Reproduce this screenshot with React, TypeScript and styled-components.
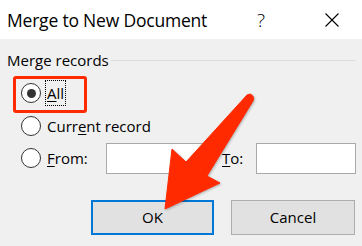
import styled, { createGlobalStyle } from "styled-components"

const GlobalStyle = createGlobalStyle`
	html, body {
		margin: 0;
		padding: 0;
		background: #f0f0f0;
	}
	body {
		font-family: "Open Sans", "Noto Sans", sans-serif;
		color: #000;
	}
`

const Dialog = styled.div`
	position: relative;
	width: 362px;
	height: 246px;
	overflow: hidden;

	display: flex;
	flex-direction: column;

	background: #f0f0f0;
`

const TitleBar = styled.div`
	height: 39px;
	flex-shrink: 0;

	display: flex;
	align-items: center;
	padding-left: 7px;

	background: #fff;
`

const Title = styled.div`
	flex: 1;
	font-size: 17.5px;
	letter-spacing: -0.2px;
`

const HelpButton = styled.div`
	width: 20px;
	margin-right: 53px;

	font-size: 19px;
	font-weight: 300;
	text-align: center;
`

const CloseButton = styled.div`
	width: 16px;
	height: 16px;
	margin-right: 22px;

	display: flex;
	align-items: center;
	justify-content: center;
`

const Body = styled.div`
	flex: 1;
	padding: 11px 6px 0 0;

	display: flex;
	flex-direction: column;
`

const LegendRow = styled.div`
	height: 20px;

	display: flex;
	align-items: center;
	gap: 2px;
	padding-left: 7px;
`

const LegendText = styled.span`
	font-size: 15px;
`

const LegendLine = styled.div`
	flex: 1;
	height: 1px;
	background: #dcdcdc;
`

const Options = styled.div`
	margin-top: 7px;
	padding-left: 21px;

	display: flex;
	flex-direction: column;
`

const OptionRow = styled.div`
	height: 32.5px;

	display: flex;
	align-items: center;
`

const Radio = styled.span<{ $checked?: boolean }>`
	width: 20px;
	height: 20px;
	flex-shrink: 0;
	box-sizing: border-box;

	display: flex;
	align-items: center;
	justify-content: center;

	background: #fff;
	border: 1px solid #333;
	border-radius: 50%;

	&::after {
		content: "";
		display: ${({ $checked }) => ($checked ? "block" : "none")};
		width: 9px;
		height: 9px;
		background: #333;
		border-radius: 50%;
	}
`

const Label = styled.span<{ $focused?: boolean }>`
	margin-left: ${({ $focused }) => ($focused ? "4px" : "6px")};
	padding: ${({ $focused }) => ($focused ? "2px 1px" : "0")};

	font-size: 15px;
	line-height: 20px;
	border: ${({ $focused }) => ($focused ? "1px dotted #000" : "none")};
`

const Key = styled.span`
	text-decoration: underline;
	text-underline-offset: 2px;
`

const FromLabel = styled(Label)`
	width: 59px;
	flex-shrink: 0;
`

const TextBox = styled.div`
	width: 100px;
	height: 31px;
	flex-shrink: 0;
	box-sizing: border-box;
	background: #fff;
	border: 1px solid #a8a8ad;
`

const ToLabel = styled.span`
	margin-left: 16px;
	width: 34px;
	flex-shrink: 0;
	font-size: 15px;
`

const Buttons = styled.div`
	margin-top: 25px;
	padding-left: 91px;

	display: flex;
	gap: 17px;
`

const Button = styled.div<{ $default?: boolean }>`
	width: ${({ $default }) => ($default ? "123px" : "124px")};
	height: 35px;
	box-sizing: border-box;

	display: flex;
	align-items: center;
	justify-content: center;

	font-size: 15px;
	background: #e1e1e1;
	border: ${({ $default }) => ($default ? "2px solid #0078d7" : "1px solid #adadad")};
`

const Highlight = styled.div`
	position: absolute;
	left: 13px;
	top: 76px;
	width: 74px;
	height: 37px;
	box-sizing: border-box;

	border: 3px solid #ff2a00;
	border-radius: 3px;
`

const Arrow = styled.svg`
	position: absolute;
	left: 0;
	top: 0;
	filter: drop-shadow(1px 1px 1px rgba(0, 0, 0, 0.25));
`

const App = () => {
	return (
		<Dialog>
			<GlobalStyle />
			<TitleBar>
				<Title>Merge to New Document</Title>
				<HelpButton>?</HelpButton>
				<CloseButton>
					<svg width="16" height="16" viewBox="0 0 16 16">
						<path d="M1.5 1.5 L14.5 14.5 M14.5 1.5 L1.5 14.5" stroke="#000" strokeWidth="1.1" />
					</svg>
				</CloseButton>
			</TitleBar>
			<Body>
				<LegendRow>
					<LegendText>Merge records</LegendText>
					<LegendLine />
				</LegendRow>
				<Options>
					<OptionRow>
						<Radio $checked />
						<Label $focused><Key>A</Key>ll</Label>
					</OptionRow>
					<OptionRow>
						<Radio />
						<Label>Curr<Key>e</Key>nt record</Label>
					</OptionRow>
					<OptionRow>
						<Radio />
						<FromLabel><Key>F</Key>rom:</FromLabel>
						<TextBox />
						<ToLabel><Key>T</Key>o:</ToLabel>
						<TextBox />
					</OptionRow>
				</Options>
				<Buttons>
					<Button $default>OK</Button>
					<Button>Cancel</Button>
				</Buttons>
			</Body>
			<Highlight />
			<Arrow width="362" height="246" viewBox="0 0 362 246">
				<path
					d="M247 95 L186 162 L172 149 L165 209 L220 183 L207 176 L253 101 Q255 96 250 94 Z"
					fill="#ff2a00"
					stroke="#ff2a00"
					strokeWidth="1"
					strokeLinejoin="round"
				/>
			</Arrow>
		</Dialog>
	)
}

export default App
